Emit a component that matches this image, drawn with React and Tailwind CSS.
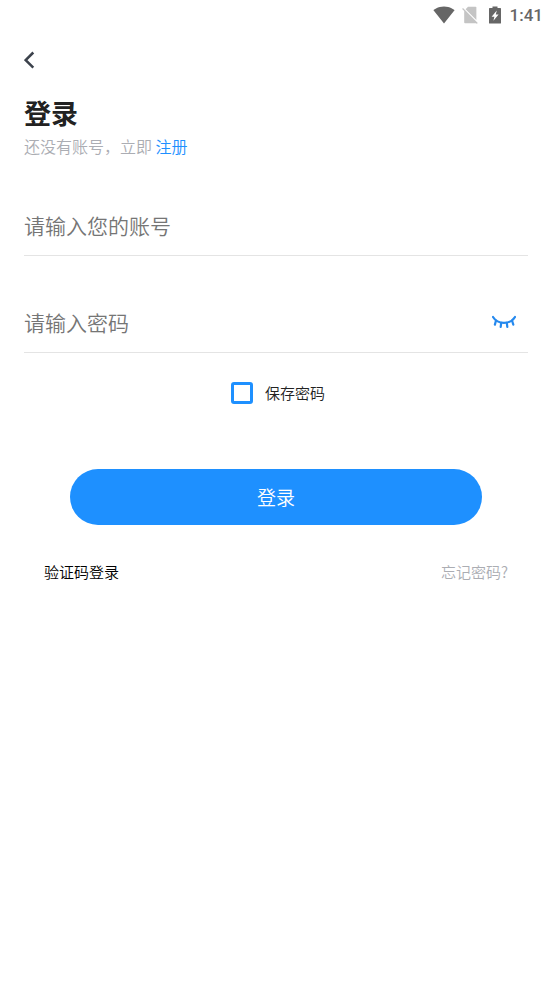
import { useState } from "react";

export default function App() {
  return (
    <div className="min-h-screen bg-white font-['Noto_Sans_CJK_SC',sans-serif] text-[#222222]">
      <StatusBar />
      <header className="flex h-14 items-center px-6">
        <button type="button" aria-label="返回">
          <svg className="block h-5 w-3" viewBox="0 0 12 20" fill="none" stroke="#3c424c" strokeWidth="2.5">
            <path d="M9.3 2.5 1.7 10.1 9.3 17.7" />
          </svg>
        </button>
      </header>
      <LoginForm />
    </div>
  );
}

function StatusBar() {
  return (
    <div className="flex h-8 items-center justify-end pr-2.5 pb-0.5 text-[#666666]">
      <svg className="h-[18px] w-[22px]" viewBox="0 0 22 18" fill="currentColor">
        <path d="M11 17.6 21.7 4.1C21.3 3.8 17.2.4 11 .4S.7 3.8.3 4.1L11 17.6z" />
      </svg>
      <svg className="ml-[7px] h-[18px] w-4" viewBox="0 0 16 18" fill="#c4c4c4">
        <path d="M14.4 1.600c0-.5-.4-.8-.8-.8H6L3.600 3.200 14.400 14V1.600z" />
        <path d="M1 2 .1 2.900 2.200 5v11.400c0 .5.4.8.8.8h10.800l1.100.6.9-.9L1 2z" />
      </svg>
      <svg className="ml-[11px] h-[18px] w-3" viewBox="0 0 12 18" fill="currentColor">
        <path
          fillRule="evenodd"
          d="M11.4 2.1H8.5V.4h-5v1.7H.6C.3 2.1 0 2.4 0 2.7V17c0 .3.3.6.6.6h10.8c.3 0 .6-.3.6-.6V2.7c0-.3-.3-.6-.6-.6zM4.4 14.8l1-4H2.6L7.8 4.6l-1 4h2.8L4.4 14.8z"
        />
      </svg>
      <span className="ml-[9px] font-[Roboto,sans-serif] text-[17px] leading-[30px] font-medium">1:41</span>
    </div>
  );
}

function LoginForm() {
  const [visible, setVisible] = useState(false);

  return (
    <main className="pr-[25px] pl-6">
      <h1 className="text-[27px] leading-[50px] font-bold">登录</h1>
      <p className="text-base leading-4 font-[350] text-[#abadb3]">
        还没有账号，立即{" "}
        <a href="#register" className="text-[#1e90ff]">注册</a>
      </p>

      <form className="pt-11" onSubmit={(e) => e.preventDefault()}>
        <div className="border-b border-[#e4e4e4]">
          <input
            type="text"
            aria-label="账号"
            placeholder="请输入您的账号"
            className="block h-[57px] w-full pb-1 text-[21px] font-[350] outline-none placeholder:text-[#757575]"
          />
        </div>
        <div className="mt-10 flex items-center border-b border-[#e4e4e4]">
          <input
            type={visible ? "text" : "password"}
            aria-label="密码"
            placeholder="请输入密码"
            className="block h-14 min-w-0 flex-1 pb-1 text-[21px] font-[350] outline-none placeholder:text-[#757575]"
          />
          <button type="button" aria-label="显示密码" className="mr-3 pb-1" onClick={() => setVisible((v) => !v)}>
            <svg
              className="block h-[18px] w-6"
              viewBox="0 0 24 18"
              fill="none"
              stroke="#2589ee"
              strokeWidth="2.2"
              strokeLinecap="round"
            >
              <path d="M1 4C3.2 7.6 7.3 9.9 12 9.9S20.8 7.6 23 4" />
              <path d="M4 7.5 2.9 11.6M9.2 9.8 8.7 13.8M14.8 9.8 15.3 13.8M20 7.5 21.3 11.6" />
            </svg>
          </button>
        </div>

        <label className="mt-7 flex items-center justify-center gap-3 pl-1 text-[15px] leading-6 font-[350]">
          <input
            type="checkbox"
            className="h-[22px] w-[22px] appearance-none rounded-[3px] border-[3px] border-[#1e90ff] checked:bg-[#1e90ff]"
          />
          保存密码
        </label>

        <button
          type="submit"
          className="mx-auto mt-16 block h-14 w-9/11 rounded-full bg-[#1e90ff] text-[19px] font-[350] text-white"
        >
          登录
        </button>
      </form>

      <div className="mt-[35px] flex justify-between px-5 text-[15px] leading-6 font-[350]">
        <a href="#code" className="text-black">验证码登录</a>
        <a href="#forgot" className="text-[#abadb3]">忘记密码?</a>
      </div>
    </main>
  );
}
